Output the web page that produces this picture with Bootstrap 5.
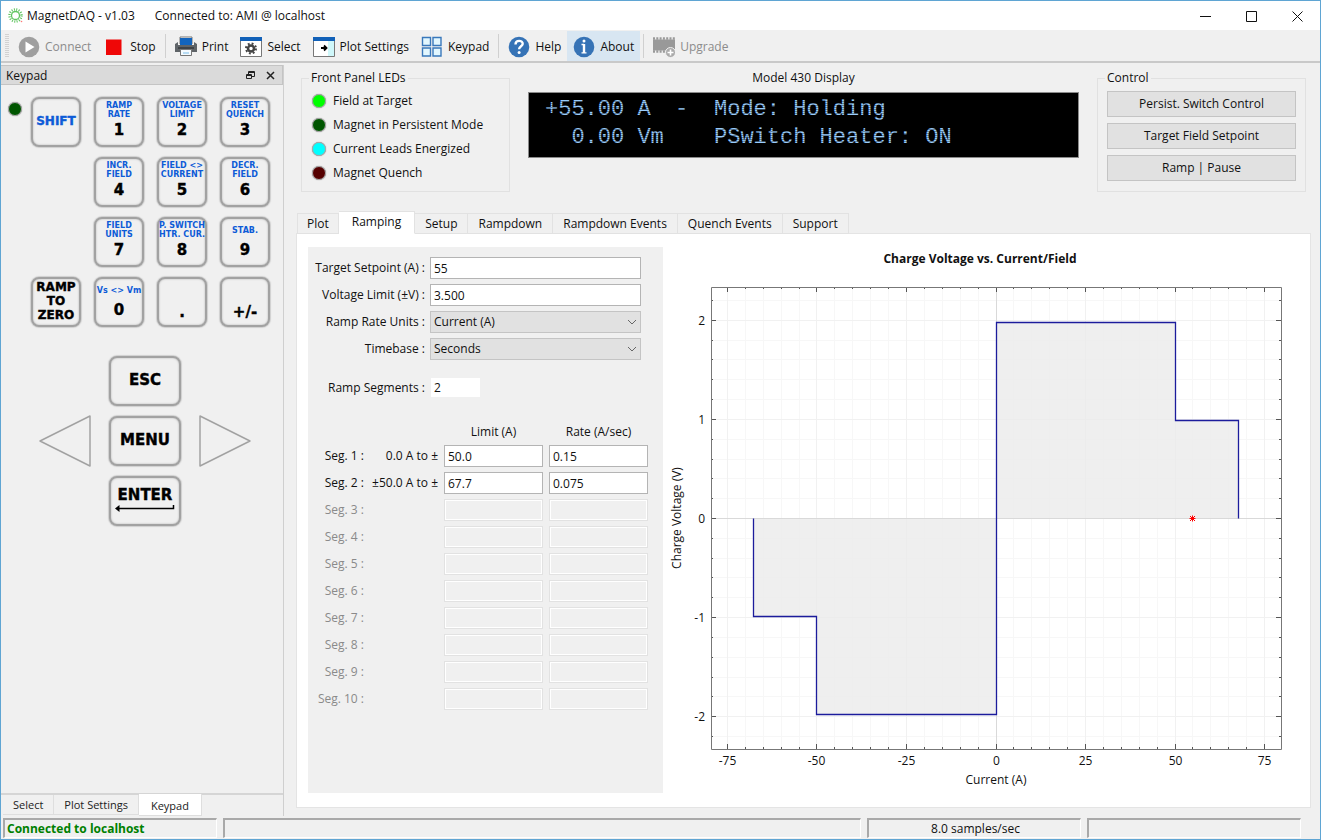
<!DOCTYPE html>
<html lang="en">
<head>
<meta charset="utf-8">
<meta name="viewport" content="width=device-width, initial-scale=1">
<title>MagnetDAQ - v1.03</title>
<link rel="stylesheet" href="https://cdn.jsdelivr.net/npm/bootstrap@5.3.0/dist/css/bootstrap.min.css">
<style>
  body { font: 12px/16px "Open Sans", "Noto Sans", sans-serif; color: #111; background: #f0f0f0; }
  button, input, select { font: inherit; color: inherit; }
  .app-window { border: 1px solid #5fa5d3; }
  .title-bar { height: 29px; padding-left: 7px; }
  .app-state { margin-left: 20px; }
  .win-ctl { width: 46px; height: 29px; border: 0; background: none; padding: 0; }
  .tool-bar { height: 33px; padding: 1px 0 0 4px; border-bottom: 2px solid #c9c9c9; }
  .grip { width: 4px; margin: 3px 3px 3px 0; background: repeating-linear-gradient(#d2d2d2 0 1px, transparent 1px 2px); }
  .tool { border: 0; background: none; padding: 1px 6px 0; gap: 5px; white-space: nowrap; }
  .tool:disabled { color: #8c8c8c; }
  .tool.current { background: #d8e6f2; }
  .tool svg { width: 22px; height: 22px; }
  .tool-sep { width: 1px; margin: 3px; background: #d0d0d0; }

  .dock { width: 283px; border-right: 1px solid #cfcfcf; margin-top: 2px; margin-bottom: 2px; }
  .dock-title { height: 20px; background: #dadada; border: 1px solid #c4c4c4; border-left: 0; padding: 1px 2px 0 5px; }
  .dock-btn { border: 0; background: none; padding: 0; width: 20px; height: 18px; }
  .keypad { display: grid; grid-template-columns: 18px repeat(4, 52px); column-gap: 11px; row-gap: 8px; padding: 11px 0 0; }
  .key { border: 2px solid #a2a2a2; border-radius: 8px; background: #f0f0f0; box-shadow: inset 0 0 2px #aaa, 0 0 1px 1px #cfcfcf; padding: 0; height: 50px; margin: 1px;
         font: bold 15px/18px "DejaVu Sans", sans-serif; color: #000; -webkit-text-stroke: .4px; display: flex; flex-direction: column; align-items: center; justify-content: flex-start; white-space: nowrap; }
  .key .shifted { font-size: 8px; line-height: 9px; -webkit-text-stroke: 0; color: #0d5bd7; height: 22px; display: flex; flex-direction: column; align-items: center; justify-content: center; }
  .key.mid { justify-content: center; font-size: 12px; line-height: 14px; padding-bottom: 2px; }
  .key.wide { justify-content: center; line-height: 16px; padding-bottom: 3px; }
  .key.low { justify-content: flex-end; padding-bottom: 4px; }
  .key.key-blue { color: #0d5bd7; }
  .nav-keys { display: grid; grid-template-columns: 52px 74px 52px; column-gap: 17px; row-gap: 8px; padding: 27px 0 0 38px; }
  .arrow-key { border: 0; background: none; padding: 0; height: 52px; }
  .led { width: 14px; height: 14px; border-radius: 50%; border: 1px solid #aaa; box-shadow: 0 0 1px #777; display: block; flex: none; }
  .shift-led { margin: 6px 0 0 7px; }
  .led-dark { background: #005500; } .led-on { background: #0f0; } .led-cyan { background: #0ff; } .led-red { background: #500; }
  .dock-tabs { border-top: 2px solid #d5d5d5; padding-left: 2px; height: 23px; }
  .dock-tabs a { color: #222; text-decoration: none; border: 1px solid #dedede; border-top: 0; border-left: 0; height: 20px; line-height: 20px; font-size: 11px; padding: 0 10px; }
  .dock-tabs a.active { background: #fff; height: 22px; margin-top: -1px; line-height: 24px; padding: 0 12px; }

  .workspace { padding: 7px 9px 10px 12px; }
  .panel-row { padding: 0 5px; }
  .group-box { border: 1px solid #e1e1e1; width: 209px; height: 122px; padding: 0 9px; margin: 0; }
  .group-box legend { float: none; width: auto; font-size: 12px; line-height: 16px; margin: 0 0 3px -2px; padding: 0 2px; background: #f0f0f0; }
  .led-row { height: 24px; gap: 7px; padding-left: 1px; }
  .btn-stack { display: grid; gap: 6px; padding-top: 2px; }
  .display-box { margin: 0 18px; }
  .lcd { background: #000; border: 1px solid #8a8a8a; height: 66px; padding: 3px 0 0 16px; position: relative; overflow: hidden; margin-top: 6px; }
  .lcd-line { display: grid; grid-template-columns: 130px 39px auto; font: 22px/28px "Liberation Mono", monospace; color: #9accfc; white-space: pre; }
  .lcd::after { content: ""; position: absolute; inset: 0; background: repeating-linear-gradient(rgba(0,0,0,.35) 0 1px, transparent 1px 2px); }
  .flat-btn { height: 26px; border: 1px solid #c4c4c4; background: #e1e1e1; padding: 0; border-radius: 0; }
  .main-tabs { margin-top: 19px; padding-left: 1px; height: 23px; align-items: flex-end; position: relative; z-index: 1; margin-bottom: -1px; }
  .main-tabs a { color: #111; text-decoration: none; border: 1px solid #e2e2e2; border-left: 0; padding: 0 10px; height: 21px; line-height: 20px; }
  .main-tabs a.active { background: #fff; height: 23px; border-bottom-color: #fff; padding: 0 13px; }
  .main-tabs a:first-child { border-left: 1px solid #e2e2e2; padding: 0 9px; }
  .pane { border: 1px solid #e4e4e4; background: #fff; padding: 13px 0 14px 11px; }
  .settings { width: 355px; background: #f0f0f0; padding: 10px 15px 0 0; }
  .field-grid { display: grid; grid-template-columns: 117px 211px; column-gap: 5px; row-gap: 5px; align-items: center; }
  .field-grid label { text-align: right; }
  .box { height: 22px; min-width: 0; width: 100%; border: 1px solid #b4b4b4; background: #fff; border-radius: 0; padding: 0 3px; }
  select.box { appearance: none; background: #e1e1e1 url("data:image/svg+xml,%3Csvg xmlns='http://www.w3.org/2000/svg' width='10' height='6'%3E%3Cpath d='M1 1l4 4 4-4' fill='none' stroke='%23666'/%3E%3C/svg%3E") no-repeat right 3px center; border-color: #c4c4c4; }
  .box.short { width: 49px; height: 19px; border: 0; margin-left: 1px; }
  .spaced { margin-top: 13px; }
  .box:disabled { background: #f0f0f0; border-color: #e2e2e2; box-shadow: inset 0 0 0 1px #fff; }
  .seg-grid { display: grid; grid-template-columns: 57px 68px 99px 99px; column-gap: 6px; row-gap: 5px; align-items: center; margin: 27px 0 0 -1px; white-space: nowrap; }
  .seg-grid > :not(input) { text-align: right; }
  .seg-grid .head { text-align: center; height: 16px; }
  .off { color: #8a8a8a; }
  .plot-area { min-width: 0; margin: -13px 0 -14px; }
  .plot-area svg { display: block; width: 100%; height: 100%; }
  .plot-area text { fill: #111; font-size: 12px; }
  .status-bar { height: 21px; padding: 0 19px 1px 2px; gap: 6px; }
  .status-cell { border: 1px solid #fff; border-top: 2px solid #a9a9a9; border-left: 2px solid #a9a9a9; padding-left: 2px; line-height: 18px; }
  .status-cell.narrow { width: 214px; flex: none; }
  .online { color: #008000; }
</style>
</head>
<body>
<div class="app-window d-flex flex-column min-vh-100">
  <header class="title-bar d-flex align-items-center bg-white">
    <svg width="15" height="15" viewBox="0 0 15 15" class="me-1"><g fill="none" stroke="#5fc45f"><circle cx="7.5" cy="7.5" r="4" stroke-width="1.3"/><circle cx="7.5" cy="7.5" r="6" stroke-width="2.4" stroke-dasharray="1 1.36"/></g><circle cx="13.500" cy="13.500" r=".8" fill="#f77"/></svg>
    <span>MagnetDAQ - v1.03</span><span class="app-state flex-grow-1">Connected to: AMI @ localhost</span>
    <button class="win-ctl" aria-label="Minimize"><svg width="11" height="11" stroke="#111"><path d="M0 5.500h11"/></svg></button>
    <button class="win-ctl" aria-label="Maximize"><svg width="11" height="11" stroke="#111" fill="none"><path d="M.5.5h10v10H.5z"/></svg></button>
    <button class="win-ctl" aria-label="Close"><svg width="11" height="11" stroke="#111"><path d="M.5.5l10 10M10.500.5l-10 10"/></svg></button>
  </header>

  <nav class="tool-bar d-flex">
    <span class="grip"></span>
    <button class="tool d-flex align-items-center" disabled><svg viewBox="0 0 22 22"><circle cx="11" cy="11" r="10.300" fill="#9f9f9f"/><path d="M7.500 5.500v11l9-5.500z" fill="#fff"/></svg>Connect</button>
    <button class="tool d-flex align-items-center"><svg viewBox="0 0 22 22"><path d="M3 3.500h15.500V19H3z" fill="#ef0707"/></svg>Stop</button>
    <span class="tool-sep"></span>
    <button class="tool d-flex align-items-center"><svg viewBox="0 0 22 22"><path d="M5 1h12v7H5z" fill="#fff" stroke="#777"/><path d="M0 8l3-2v3h16V6l3 2v8H0z" fill="#5f6468"/><path d="M5 2h12v7H5z" fill="#1264bd"/><path d="M3 11h16v2H3z" fill="#3f4347"/><path d="M5.500 13.500h11v6h-11z" fill="#f5fbff" stroke="#777"/><path d="M8 16h6v2H8z" fill="#b7dcf4"/></svg>Print</button>
    <button class="tool d-flex align-items-center"><svg viewBox="0 0 22 22"><path d="M.5 1.500h21v19H.5z" fill="#fff" stroke="#777"/><path d="M0 1h22v4H0z" fill="#1261b8"/><circle cx="11" cy="12.500" r="3" fill="none" stroke="#444" stroke-width="2.500"/><circle cx="11" cy="12.500" r="5" fill="none" stroke="#444" stroke-width="2" stroke-dasharray="1.900 2.030"/></svg>Select</button>
    <button class="tool d-flex align-items-center"><svg viewBox="0 0 22 22"><path d="M.5 1.500h21v19H.5z" fill="#fff" stroke="#777"/><path d="M15 5h6v15h-6z" fill="#cff7fa"/><path d="M0 1h22v4H0z" fill="#1261b8"/><path d="M8 12h5M11 9.500l2.500 2.500-2.500 2.500" fill="none" stroke="#000" stroke-width="1.800"/></svg>Plot Settings</button>
    <button class="tool d-flex align-items-center"><svg viewBox="0 0 22 22" fill="#e2f7ff" stroke="#3978bb" stroke-width="1.400"><path d="M1.500 1.500h8v8h-8zM12 1.500h8v8h-8zM1.500 12h8v8h-8zM12 12h8v8h-8z"/></svg>Keypad</button>
    <span class="tool-sep"></span>
    <button class="tool d-flex align-items-center"><svg viewBox="0 0 22 22"><circle cx="11" cy="11" r="10.300" fill="#3673b6"/><path d="M7.500 8.500c0-5 7.500-4.500 7.200-.6-.2 2.300-3.600 2.500-3.600 5.400" fill="none" stroke="#fff" stroke-width="2.400"/><circle cx="11.100" cy="16.500" r="1.500" fill="#fff"/></svg>Help</button>
    <button class="tool current d-flex align-items-center"><svg viewBox="0 0 22 22"><circle cx="11" cy="11" r="10.300" fill="#3673b6"/><circle cx="11" cy="5" r="1.500" fill="#fff"/><path d="M8.500 8.500H11M8.500 16.800h5" fill="none" stroke="#fff" stroke-width="1.300"/><path d="M11 8v9" stroke="#fff" stroke-width="2.400"/></svg>About</button>
    <span class="tool-sep"></span>
    <button class="tool d-flex align-items-center" disabled><svg viewBox="0 0 22 22"><path d="M0 3.500h22v11H0z" fill="#999"/><path d="M0 2.500h22M0 15.500h22" stroke="#999" stroke-width="2.500" stroke-dasharray="2 1.300"/><circle cx="17.500" cy="16.500" r="5" fill="#aaa" stroke="#f0f0f0"/><path d="M17.500 13.500v6M14.500 16.500h6" stroke="#fff" stroke-width="1.600"/></svg>Upgrade</button>
  </nav>

  <div class="d-flex flex-grow-1">
    <aside class="dock d-flex flex-column flex-shrink-0">
      <div class="dock-title d-flex align-items-center"><span class="flex-grow-1">Keypad</span>
        <button class="dock-btn" aria-label="Float"><svg class="d-block m-auto" width="9" height="9" fill="none" stroke="#222"><path d="M2.500 3V.5h6v5H6M2.500 1.500h6M.5 3.500h5v4h-5zM.5 4.500h5"/></svg></button>
        <button class="dock-btn" aria-label="Close panel"><svg class="d-block m-auto" width="9" height="9" stroke="#222" stroke-width="1.500"><path d="M1 1l7 7M8 1L1 8"/></svg></button>
      </div>
      <div class="keypad">
        <span class="led led-dark shift-led"></span>
        <button class="key mid key-blue">SHIFT</button>
        <button class="key"><span class="shifted"><span>RAMP</span><span>RATE</span></span>1</button>
        <button class="key"><span class="shifted"><span>VOLTAGE</span><span>LIMIT</span></span>2</button>
        <button class="key"><span class="shifted"><span>RESET</span><span>QUENCH</span></span>3</button>
        <span></span><span></span>
        <button class="key"><span class="shifted"><span>INCR.</span><span>FIELD</span></span>4</button>
        <button class="key"><span class="shifted"><span>FIELD &lt;&gt;</span><span>CURRENT</span></span>5</button>
        <button class="key"><span class="shifted"><span>DECR.</span><span>FIELD</span></span>6</button>
        <span></span><span></span>
        <button class="key"><span class="shifted"><span>FIELD</span><span>UNITS</span></span>7</button>
        <button class="key"><span class="shifted"><span>P. SWITCH</span><span>HTR. CUR.</span></span>8</button>
        <button class="key"><span class="shifted">STAB.</span>9</button>
        <span></span>
        <button class="key mid"><span>RAMP</span><span>TO</span><span>ZERO</span></button>
        <button class="key"><span class="shifted">Vs &lt;&gt; Vm</span>0</button>
        <button class="key low">.</button>
        <button class="key low">+/-</button>
      </div>
      <div class="nav-keys">
        <span></span><button class="key wide">ESC</button><span></span>
        <button class="arrow-key" aria-label="Left"><svg width="52" height="52" fill="#f0f0f0" stroke="#a2a2a2" stroke-width="1.500" stroke-linejoin="round"><path d="M1 26L51 1v50z"/></svg></button>
        <button class="key wide">MENU</button>
        <button class="arrow-key" aria-label="Right"><svg width="52" height="52" fill="#f0f0f0" stroke="#a2a2a2" stroke-width="1.500" stroke-linejoin="round"><path d="M51 26L1 1v50z"/></svg></button>
        <span></span><button class="key wide">ENTER<svg width="60" height="9" stroke="#000"><path d="M3 5.500h55.500V2" fill="none" stroke-width="1.500"/><path d="M0 5.500L4.500 2v7z" stroke="none"/></svg></button><span></span>
      </div>
      <nav class="dock-tabs d-flex mt-auto"><a href="#">Select</a><a href="#">Plot Settings</a><a href="#" class="active">Keypad</a></nav>
    </aside>

    <main class="workspace d-flex flex-column flex-grow-1">
      <div class="panel-row d-flex">
        <fieldset class="group-box flex-shrink-0"><legend>Front Panel LEDs</legend>
          <div class="led-row d-flex align-items-center"><span class="led led-on"></span>Field at Target</div>
          <div class="led-row d-flex align-items-center"><span class="led led-dark"></span>Magnet in Persistent Mode</div>
          <div class="led-row d-flex align-items-center"><span class="led led-cyan"></span>Current Leads Energized</div>
          <div class="led-row d-flex align-items-center"><span class="led led-red"></span>Magnet Quench</div>
        </fieldset>
        <section class="display-box flex-grow-1 text-center"><div>Model 430 Display</div>
          <div class="lcd text-start">
            <div class="lcd-line"><span>+55.00 A</span><span>-</span><span>Mode: Holding</span></div>
            <div class="lcd-line"><span>  0.00 Vm</span><span></span><span>PSwitch Heater: ON</span></div>
          </div>
        </section>
        <fieldset class="group-box flex-shrink-0"><legend>Control</legend>
          <div class="btn-stack">
            <button class="flat-btn">Persist. Switch Control</button><button class="flat-btn">Target Field Setpoint</button><button class="flat-btn">Ramp | Pause</button>
          </div>
        </fieldset>
      </div>

      <nav class="main-tabs d-flex"><a href="#">Plot</a><a href="#" class="active">Ramping</a><a href="#">Setup</a><a href="#">Rampdown</a><a href="#">Rampdown Events</a><a href="#">Quench Events</a><a href="#">Support</a></nav>
      <div class="pane d-flex flex-grow-1">
        <form class="settings flex-shrink-0">
          <div class="field-grid">
            <label for="target">Target Setpoint (A) :</label><input class="box" id="target" value="55">
            <label for="vlimit">Voltage Limit (±V) :</label><input class="box" id="vlimit" value="3.500">
            <label for="units">Ramp Rate Units :</label><select class="box" id="units"><option>Current (A)</option></select>
            <label for="timebase">Timebase :</label><select class="box" id="timebase"><option>Seconds</option></select>
            <label for="segments" class="spaced">Ramp Segments :</label><input class="box short spaced" id="segments" value="2">
          </div>
          <div class="seg-grid">
            <span></span><span></span><span class="head">Limit (A)</span><span class="head">Rate (A/sec)</span>
            <label for="l1">Seg. 1 :</label><span>0.0 A to ±</span><input class="box" id="l1" value="50.0"><input class="box" aria-label="Rate 1" value="0.15">
            <label for="l2">Seg. 2 :</label><span>±50.0 A to ±</span><input class="box" id="l2" value="67.7"><input class="box" aria-label="Rate 2" value="0.075">
            <label for="l3" class="off">Seg. 3 :</label><span></span><input class="box" id="l3" disabled><input class="box" aria-label="Rate 3" disabled>
            <label for="l4" class="off">Seg. 4 :</label><span></span><input class="box" id="l4" disabled><input class="box" aria-label="Rate 4" disabled>
            <label for="l5" class="off">Seg. 5 :</label><span></span><input class="box" id="l5" disabled><input class="box" aria-label="Rate 5" disabled>
            <label for="l6" class="off">Seg. 6 :</label><span></span><input class="box" id="l6" disabled><input class="box" aria-label="Rate 6" disabled>
            <label for="l7" class="off">Seg. 7 :</label><span></span><input class="box" id="l7" disabled><input class="box" aria-label="Rate 7" disabled>
            <label for="l8" class="off">Seg. 8 :</label><span></span><input class="box" id="l8" disabled><input class="box" aria-label="Rate 8" disabled>
            <label for="l9" class="off">Seg. 9 :</label><span></span><input class="box" id="l9" disabled><input class="box" aria-label="Rate 9" disabled>
            <label for="l10" class="off">Seg. 10 :</label><span></span><input class="box" id="l10" disabled><input class="box" aria-label="Rate 10" disabled>
          </div>
        </form>
        <div class="plot-area flex-grow-1"><svg id="plot" role="img" aria-label="Charge Voltage vs. Current/Field"></svg></div>
      </div>
    </main>
  </div>

  <footer class="status-bar d-flex">
    <div class="status-cell narrow fw-bold online">Connected to localhost</div>
    <div class="status-cell flex-grow-1"></div>
    <div class="status-cell narrow text-center">8.0 samples/sec</div>
    <div class="status-cell narrow"></div>
  </footer>
</div>
<script src="https://cdn.jsdelivr.net/npm/bootstrap@5.3.0/dist/js/bootstrap.bundle.min.js"></script>
<script>
  // Charge voltage plot: redrawn to fill its pane whenever the window changes size
  const svg = document.getElementById('plot');
  const curve = [[-67.7, 0], [-67.7, -0.99], [-50, -0.99], [-50, -1.98], [0, -1.98], [0, 1.98], [50, 1.98], [50, 0.99], [67.7, 0.99], [67.7, 0]];
  function draw() {
    const box = svg.parentNode.getBoundingClientRect(), w = Math.round(box.width), h = Math.round(box.height);
    const L = 48, R = w - 29, T = 53, B = h - 58, mx = (L + R) / 2, my = (T + B) / 2;
    const X = v => Math.floor(mx + v * (R - L) / 159.2) + .5, Y = v => Math.round(my - v * (B - T) / 4.66) + .5;
    const line = (d, c, s = 1) => `<path d="${d}" fill="none" stroke="${c}" stroke-width="${s}"/>`;
    const text = (x, y, t, a = 'middle', extra = '') => `<text x="${x}" y="${y}" text-anchor="${a}" ${extra}>${t}</text>`;
    let grid = '', major = '', ticks = '', labels = '';
    for (let i = -15; i <= 15; i++) {
      const x = X(i * 5), n = i % 5 ? 2 : 5;
      if (n === 5) { major += `M${x} ${T}V${B}`; labels += text(x, B + 16, i * 5); } else grid += `M${x} ${T}V${B}`;
      ticks += `M${x} ${B}v-${n}M${x} ${T}v${n}`;
    }
    for (let i = -11; i <= 11; i++) {
      const y = Y(i / 5), n = i % 5 ? 2 : 5;
      if (n === 5) { major += `M${L} ${y}H${R}`; labels += text(L - 6, y + 4, i / 5, 'end'); } else grid += `M${L} ${y}H${R}`;
      ticks += `M${L} ${y}h${n}M${R} ${y}h-${n}`;
    }
    const pts = curve.map(p => X(p[0]) + ' ' + Y(p[1])).join('L');
    const sx = X(55), sy = Y(0);
    svg.innerHTML = line(grid, '#f7f7f7') + line(major, '#f1f1f1')
      + `<path d="M${pts}z" fill="#ebebeb" fill-opacity=".8"/>`
      + line(`M${L} ${Y(0)}H${R}M${X(0)} ${T}V${B}`, '#d9d9d9') + line(ticks, '#555')
      + line(`M${L + .5} ${T + .5}H${R + .5}V${B + .5}H${L + .5}z`, '#777') + line('M' + pts, '#1c1c9c', 1.3)
      + line(`M${sx - 3} ${sy}h6M${sx} ${sy - 3}v6M${sx - 2.5} ${sy - 2.5}l5 5M${sx + 2.5} ${sy - 2.5}l-5 5`, '#f00')
      + labels + text(mx - 16, 29, 'Charge Voltage vs. Current/Field', 'middle', 'font-weight="bold"')
      + text(mx, B + 35, 'Current (A)') + text(0, 0, 'Charge Voltage (V)', 'middle', `transform="translate(18 ${my}) rotate(-90)"`);
  }
  draw();
  window.addEventListener('resize', draw);
</script>
</body>
</html>
